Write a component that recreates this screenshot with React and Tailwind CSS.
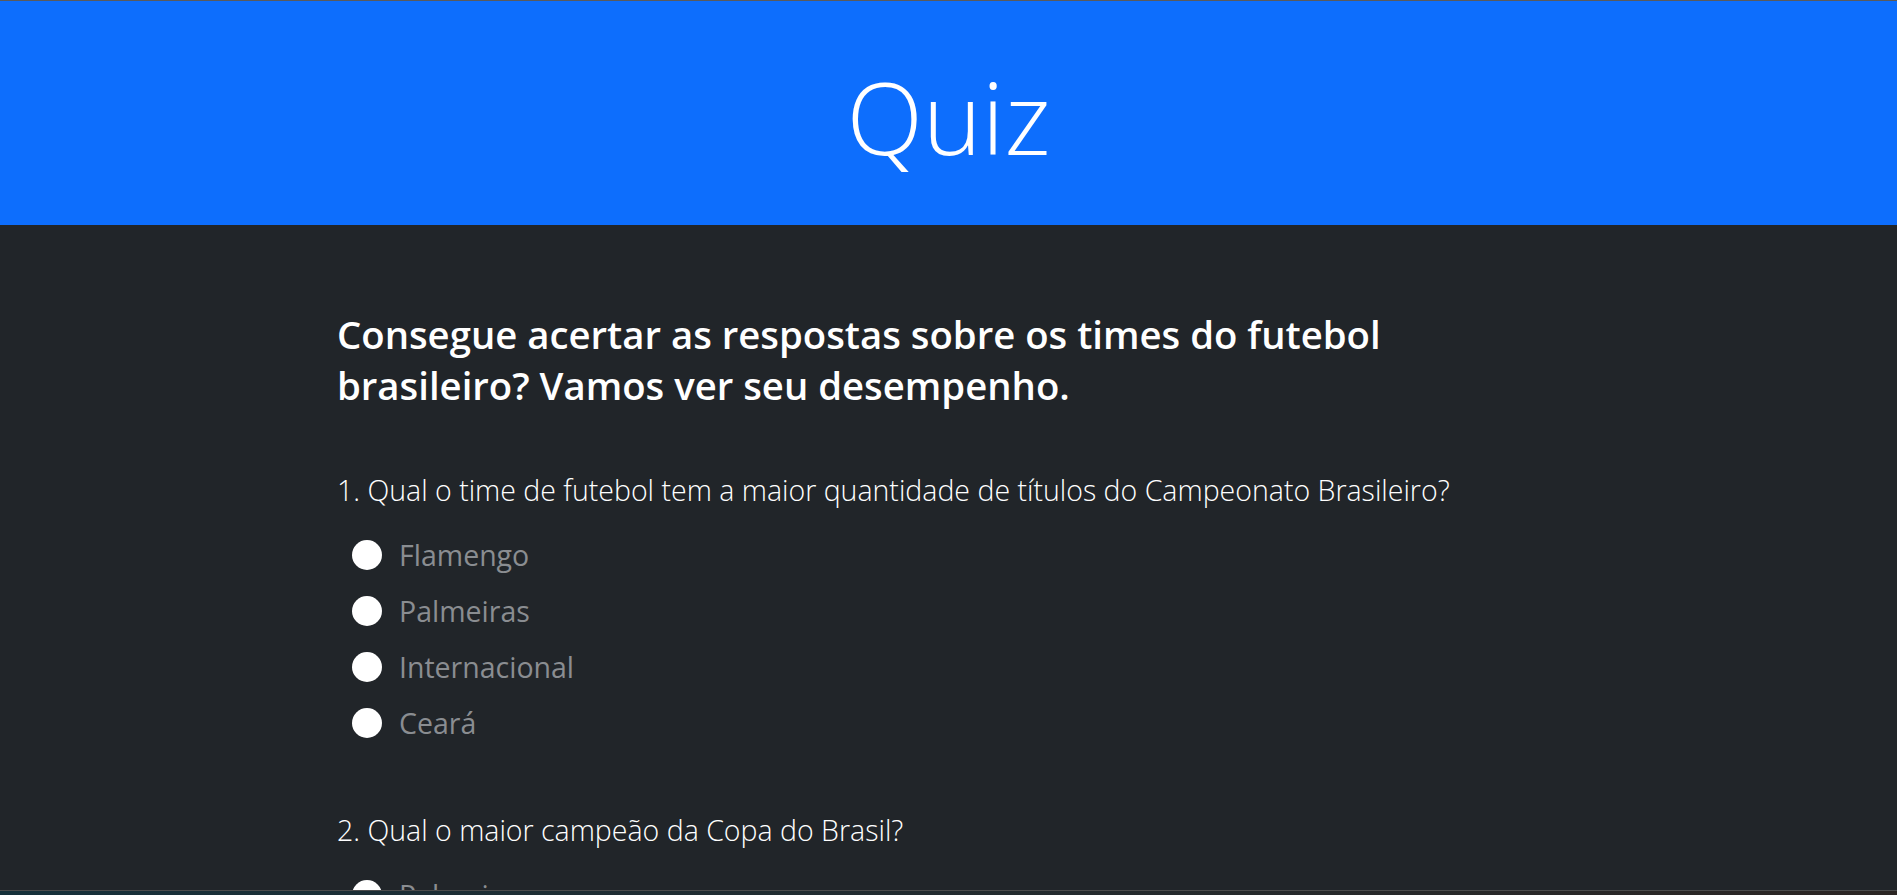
const questions = [
  {
    id: "q1",
    title: "1. Qual o time de futebol tem a maior quantidade de títulos do Campeonato Brasileiro?",
    options: ["Flamengo", "Palmeiras", "Internacional", "Ceará"],
  },
  {
    id: "q2",
    title: "2. Qual o maior campeão da Copa do Brasil?",
    options: ["Palmeiras", "Cruzeiro", "Grêmio", "Flamengo"],
  },
  {
    id: "q3",
    title: "3. Qual time foi o primeiro campeão da Libertadores entre os brasileiros?",
    options: ["Santos", "São Paulo", "Cruzeiro", "Vasco"],
  },
];

function Question({ q }) {
  return (
    <div className="mt-[57px] first:mt-0">
      <p className="text-[28.5px] leading-[44px] font-light text-white">{q.title}</p>
      <div className="mt-[15px] flex flex-col">
        {q.options.map((opt) => (
          <label
            key={opt}
            className="flex h-[56px] items-center gap-[17px] pl-[15px] cursor-pointer"
          >
            <input
              type="radio"
              name={q.id}
              className="h-[30px] w-[30px] shrink-0 appearance-none rounded-full bg-white"
            />
            <span className="text-[28.5px] leading-[45px] text-[#8a8d91]">{opt}</span>
          </label>
        ))}
      </div>
    </div>
  );
}

export default function App() {
  return (
    <div
      className="min-h-screen bg-[#212529]"
      style={{ fontFamily: '"Open Sans", "Noto Sans", sans-serif' }}
    >
      {/* Header */}
      <header className="h-[225px] border-t border-[#5a5a5a] bg-[#0d6efd] pt-[65px]">
        <h1 className="text-center text-[100px] leading-none font-light text-white">
          Quiz
        </h1>
      </header>

      {/* Quiz body */}
      <main className="mx-auto w-[1223px] pr-[63px] pt-[84px] pb-20">
        <h2 className="text-[38.3px] leading-[51px] font-semibold text-white">
          Consegue acertar as respostas sobre os times do futebol brasileiro? Vamos
          ver seu desempenho.
        </h2>

        <div className="mt-[57px]">
          {questions.map((q) => (
            <Question key={q.id} q={q} />
          ))}
        </div>
      </main>

      {/* window edge */}
      <div className="fixed bottom-0 left-0 right-0 h-[5px] border-t border-[#4b4b4b] bg-gradient-to-r from-[#15303a] to-[#2b2523]" />
    </div>
  );
}
